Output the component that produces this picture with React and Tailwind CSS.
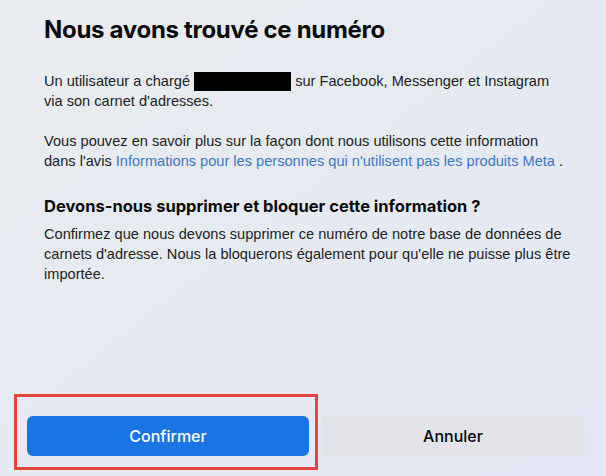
export default function App() {
  return (
    <div className="w-[606px] h-[476px] overflow-hidden bg-gradient-to-br from-[#e9edf0] to-[#e3e8f4] flex flex-col font-['Liberation_Sans',Arial,sans-serif] text-[#1c1e21]">
      <div className="pl-[44px] pt-[14px] flex-1">
        <div className="w-[550px]">
          <h1 className="font-['Inter',sans-serif] font-bold text-[24px] leading-[32px] tracking-[-0.3px] text-[#0a0a0a]">
            Nous avons trouvé ce numéro
          </h1>

          <p className="mt-[25px] text-[14.6px] leading-[20px]">
            Un utilisateur a chargé{' '}
            <span className="inline-block align-[-5px] w-[97px] h-[19px] bg-black" />{' '}
            sur Facebook, Messenger et Instagram
            <br />
            via son carnet d'adresses.
          </p>

          <p className="mt-[20px] text-[14.6px] leading-[20px]">
            Vous pouvez en savoir plus sur la façon dont nous utilisons cette information
            <br />
            dans l'avis{' '}
            <a className="text-[#3b78c9]">Informations pour les personnes qui n'utilisent pas les produits Meta</a> .
          </p>

          <h2 className="mt-[24px] font-['Inter',sans-serif] font-bold text-[16.5px] leading-[22px] text-[#0a0a0a]">
            Devons-nous supprimer et bloquer cette information ?
          </h2>

          <p className="mt-[7px] text-[14.6px] leading-[20px]">
            Confirmez que nous devons supprimer ce numéro de notre base de données de
            <br />
            carnets d'adresse. Nous la bloquerons également pour qu'elle ne puisse plus être
            <br />
            importée.
          </p>
        </div>
      </div>

      <div className="flex items-start pl-[14px] pb-[6px]">
        <div className="border-[3px] border-[#e4463d] w-[304px] h-[76px] pl-[10px] pr-[6px] pt-[19px]">
          <button className="w-full h-[40px] rounded-[6px] bg-[#1b74e4] text-white text-[16px] font-['Inter',sans-serif] font-medium">
            Confirmer
          </button>
        </div>
        <button className="ml-[3px] mt-[22px] w-[264px] h-[40px] bg-[#e2e4e9] text-[16px] font-['Inter',sans-serif] font-medium text-[#050505]">
          Annuler
        </button>
      </div>
    </div>
  );
}
